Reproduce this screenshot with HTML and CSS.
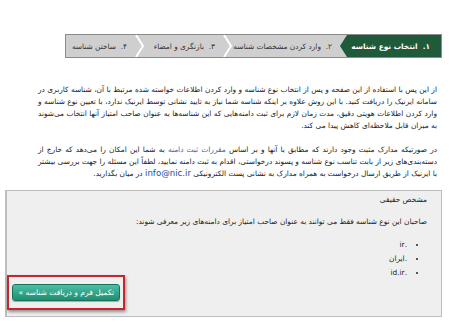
FILE: index.html
```html
<!DOCTYPE html>
<html lang="fa" dir="rtl">
<head>
    <meta charset="UTF-8">
    <title>ساختن شناسه</title>
    <link rel="stylesheet" href="styles.css">
</head>
<body>
<div class="page">
    <div class="steps">
        <div class="step active s1">۱. &nbsp;انتخاب نوع شناسه</div>
        <svg class="tip" width="7" height="22" viewBox="0 0 7 22"><polygon points="7,0 0,11 7,22" fill="#1f5a3a"/></svg>
        <div class="step s2">۲. &nbsp;وارد کردن مشخصات شناسه</div>
        <svg class="sep" width="9" height="22" viewBox="0 0 9 22"><polyline points="1,0 8,11 1,22" fill="none" stroke="#fff" stroke-width="2"/></svg>
        <div class="step s3">۳. &nbsp;بازنگری و امضاء</div>
        <svg class="sep" width="9" height="22" viewBox="0 0 9 22"><polyline points="1,0 8,11 1,22" fill="none" stroke="#fff" stroke-width="2"/></svg>
        <div class="step s4">۴. &nbsp;ساختن شناسه</div>
    </div>

    <p class="intro">از این پس با استفاده از این صفحه و پس از انتخاب نوع شناسه و وارد کردن اطلاعات خواسته شده مرتبط با آن، شناسه کاربری در سامانه ایرنیک را دریافت کنید. با این روش علاوه بر اینکه شناسه شما نیاز به تایید نشانی توسط ایرنیک ندارد، با تعیین نوع شناسه و وارد کردن اطلاعات هویتی دقیق، مدت زمان لازم برای ثبت دامنه‌هایی که این شناسه‌ها به عنوان صاحب امتیاز آنها انتخاب می‌شوند به میزان قابل ملاحظه‌ای کاهش پیدا می کند.</p>

    <p class="intro">در صورتیکه مدارک مثبت وجود دارند که مطابق با آنها و بر اساس <a href="#">مقررات ثبت دامنه</a> به شما این امکان را می‌دهد که خارج از دسته‌بندی‌های زیر از بابت تناسب نوع شناسه و پسوند درخواستی، اقدام به ثبت دامنه نمایید، لطفاً این مسئله را جهت بررسی بیشتر با ایرنیک از طریق ارسال درخواست به همراه مدارک به نشانی پست الکترونیکی <a class="mail" href="#">info@nic.ir</a> در میان بگذارید.</p>

    <div class="box">
        <div class="kind">مشخص حقیقی</div>
        <div class="note">صاحبان این نوع شناسه فقط می توانند به عنوان صاحب امتیاز برای دامنه‌های زیر معرفی شوند:</div>
        <ul class="domains">
            <li>.ir</li>
            <li>.ایران</li>
            <li>.id.ir</li>
        </ul>
        <div class="frame">
            <button class="go">تکمیل فرم و دریافت شناسه &raquo;</button>
        </div>
    </div>
</div>
</body>
</html>
```

FILE: styles.css
```css
body {
    margin: 0;
    background: #fff;
    font-family: "DejaVu Sans", sans-serif;
    font-size: 7.4px;
    color: #222;
}

.page {
    width: 437px;
    margin: 0 8px 0 5px;
    padding-top: 34px;
}

.steps {
    display: flex;
    width: 375px;
    height: 22px;
    border: 1px solid #8a8a8a;
    background: #cfcfcf;
}

.step {
    display: flex;
    align-items: center;
    padding: 0 8px;
    color: #333;
    white-space: nowrap;
    flex: none;
}

.step.active {
    background: #1f5a3a;
    color: #fff;
    font-weight: bold;
    padding: 0 11px 0 6px;
}

.s1 { width: 77px; }
.s2 { width: 92px; }
.s3 { width: 63px; }
.s4 { flex: 1; }

.tip, .sep {
    display: block;
    flex: none;
}

.intro {
    margin: 0;
    padding: 0 5px 0 33px;
    text-align: justify;
    line-height: 12px;
}

.intro:first-of-type {
    margin-top: 26px;
    margin-bottom: 12px;
}

.intro a {
    color: #2a6cb0;
    text-decoration: none;
}

.intro a.mail {
    color: #1a4f9c;
    font-size: 8.6px;
    line-height: 9px;
}

.box {
    box-sizing: border-box;
    margin-top: 10px;
    height: 127px;
    border: 1px solid #bdbdbd;
    border-left-width: 2px;
    background: #efefef;
    padding: 3px 14px 0 8px;
    line-height: 12px;
}

.kind {
    margin-bottom: 10px;
}

.domains {
    margin: 10px 0 0;
    padding-right: 20px;
    line-height: 14px;
    list-style: disc;
}

.frame {
    display: inline-block;
    margin-top: -5px;
    margin-right: 302px;
    border: 2px solid #c4262e;
    padding: 7px 3px 7px;
    box-shadow: 1px 2px 3px rgba(0, 0, 0, 0.4);
}

.go {
    display: block;
    white-space: nowrap;
    font-family: "DejaVu Sans", sans-serif;
    font-size: 7.6px;
    color: #fff;
    border: 1px solid #17725c;
    border-radius: 3px;
    padding: 3px 5px;
    background: linear-gradient(#4cbfa5, #1f8e73);
    box-shadow: 0 1px 1px rgba(0, 0, 0, 0.3);
}
```
